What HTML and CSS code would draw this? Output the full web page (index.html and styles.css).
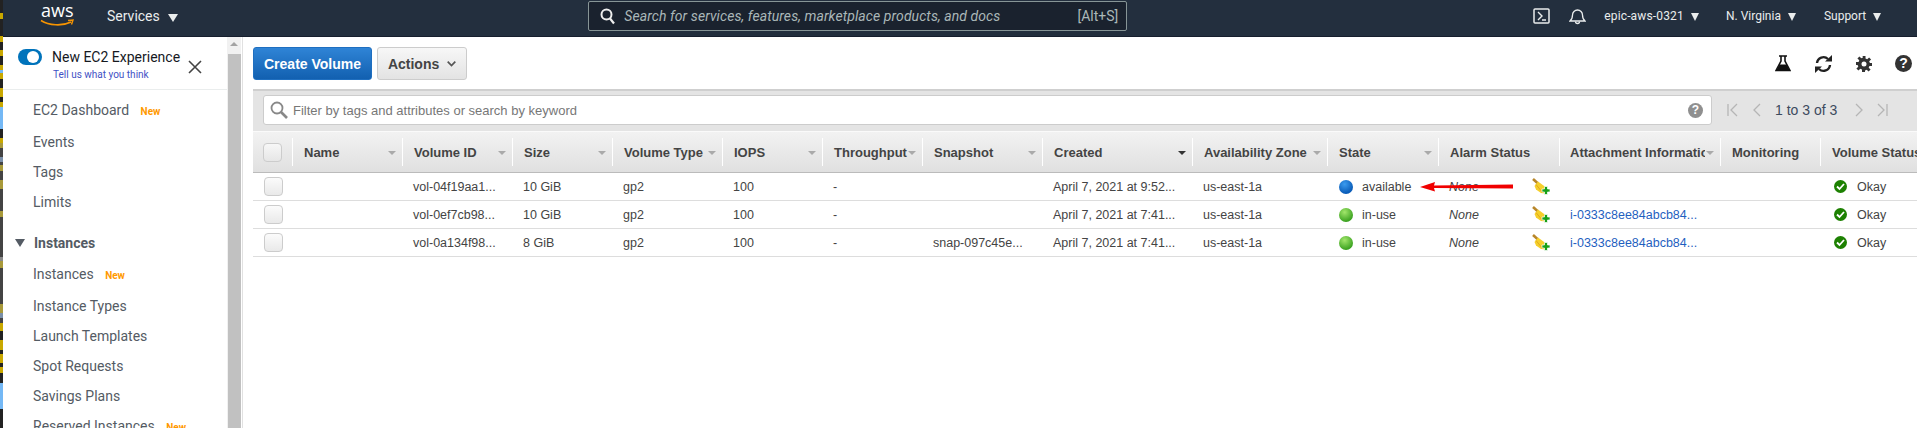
FILE: index.html
```html
<!DOCTYPE html>
<html lang="en">
  <head>
    <meta charset="UTF-8" />
    <title>Volumes | EC2 Management Console</title>
    <link rel="stylesheet" href="styles.css">
  </head>

  <body>
    <div class="strip"></div>

    <div class="page">
      <!--Top bar-->
      <header class="topbar">
        <div class="logo">
          <span class="logo-text">aws</span>
          <svg class="logo-smile" width="34" height="8" viewBox="0 0 34 8"><path d="M1 1.500C9 6.500 22 7.500 31 3" fill="none" stroke="#f79400" stroke-width="1.600"/><path d="M28 1.500l5-.5-1.500 4.500" fill="none" stroke="#f79400" stroke-width="1.400"/></svg>
        </div>
        <span class="nav-item services">Services <i class="tri tri-big"></i></span>
        <div class="searchbox">
          <svg width="16" height="17" viewBox="0 0 16 17"><circle cx="6.500" cy="6.500" r="5" fill="none" stroke="#eee" stroke-width="2"/><path d="M10 10.500l4 5" stroke="#eee" stroke-width="2.200"/></svg>
          <span class="search-hint">Search for services, features, marketplace products, and docs</span>
          <span class="search-key">[Alt+S]</span>
        </div>
        <svg class="term-icon" width="17" height="16" viewBox="0 0 17 16"><rect x="1" y="1" width="15" height="14" rx="1" fill="none" stroke="#eaeded" stroke-width="1.500"/><path d="M5 4l4 4-4 4M9 12h4" fill="none" stroke="#eaeded" stroke-width="1.400"/></svg>
        <svg class="bell-icon" width="17" height="17" viewBox="0 0 17 17"><path d="M1 13c2-1.500 2.500-3 2.500-6a5 5 0 0 1 10 0c0 3 .5 4.500 2.500 6z" fill="none" stroke="#eaeded" stroke-width="1.300"/><path d="M6.500 13.500a2 2 0 0 0 4 0" fill="none" stroke="#eaeded" stroke-width="1.300"/></svg>
        <span class="nav-item small account">epic-aws-0321 <i class="tri"></i></span>
        <span class="nav-item small region">N. Virginia <i class="tri"></i></span>
        <span class="nav-item small support">Support <i class="tri"></i></span>
      </header>

      <div class="main">
        <!--Side menu-->
        <nav class="sidebar">
          <div class="experience">
            <span class="toggle"></span>
            <div class="exp-text">
              <div class="exp-title">New EC2 Experience</div>
              <a class="exp-link">Tell us what you think</a>
            </div>
            <svg class="exp-close" width="14" height="14" viewBox="0 0 14 14"><path d="M1 1l12 12M13 1L1 13" stroke="#444" stroke-width="1.600"/></svg>
          </div>
          <ul class="menu menu-top">
            <li class="first">EC2 Dashboard <span class="new">New</span></li>
            <li>Events</li>
            <li>Tags</li>
            <li>Limits</li>
          </ul>
          <div class="menu-head"><i class="tri-menu"></i>Instances</div>
          <ul class="menu">
            <li class="first">Instances <span class="new">New</span></li>
            <li>Instance Types</li>
            <li>Launch Templates</li>
            <li>Spot Requests</li>
            <li>Savings Plans</li>
            <li>Reserved Instances <span class="new">New</span></li>
          </ul>
        </nav>
        <div class="scrollbar"><i class="scroll-up"></i><div class="scroll-thumb"></div></div>

        <!--Volumes list-->
        <section class="content">
          <div class="toolbar">
            <button class="btn btn-primary" type="button">Create Volume</button>
            <button class="btn btn-plain" type="button">Actions <svg width="9" height="6" viewBox="0 0 9 6"><path d="M.7 .7l3.800 3.800L8.300 .7" fill="none" stroke="#555" stroke-width="1.700"/></svg></button>
            <div class="tools">
              <svg width="16" height="17" viewBox="0 0 16 17"><path d="M4 1h8M6 1v5L1 15.500h14L10 6V1" fill="none" stroke="#111" stroke-width="1.600"/><path d="M4.500 9.500h7L15 16H1z" fill="#111"/></svg>
              <svg width="19" height="18" viewBox="0 0 19 18"><path d="M3 8a6.500 6.500 0 0 1 11-4" fill="none" stroke="#222" stroke-width="2.400"/><path d="M11 6.500h7V0z" fill="#222"/><path d="M16 10a6.500 6.500 0 0 1-11 4" fill="none" stroke="#222" stroke-width="2.400"/><path d="M8 11.500H1V18z" fill="#222"/></svg>
              <svg width="16" height="16" viewBox="0 0 16 16"><path d="M6.500 0h3v2.600l1.700.7 1.900-1.900 2 2-1.900 1.900.7 1.700H16v3h-2.600l-.7 1.700 1.900 1.900-2 2-1.900-1.900-1.700.7V16h-3v-2.600l-1.700-.7-1.900 1.900-2-2 1.900-1.900-.7-1.700H0v-3h2.600l.7-1.700-1.900-1.900 2-2 1.900 1.900 1.700-.7z" fill="#333"/><circle cx="8" cy="8" r="2.500" fill="#fff"/></svg>
              <span class="help help-dark">?</span>
            </div>
          </div>

          <div class="filterbar">
            <div class="filter-input">
              <svg width="18" height="18" viewBox="0 0 18 18"><circle cx="7" cy="7" r="5.500" fill="none" stroke="#888" stroke-width="1.800"/><path d="M11 11l6 6" stroke="#888" stroke-width="2.600"/></svg>
              <span class="filter-hint">Filter by tags and attributes or search by keyword</span>
              <span class="help help-grey">?</span>
            </div>
            <div class="pager">
              <svg width="12" height="14" viewBox="0 0 12 14"><path d="M1 1v12M10 1L4 7l6 6" fill="none" stroke="#b5b5b5" stroke-width="1.300"/></svg>
              <svg class="pg-prev" width="8" height="14" viewBox="0 0 8 14"><path d="M7 1L1 7l6 6" fill="none" stroke="#b5b5b5" stroke-width="1.300"/></svg>
              <span class="pg-text">1 to 3 of 3</span>
              <svg class="pg-next" width="8" height="14" viewBox="0 0 8 14"><path d="M1 1l6 6-6 6" fill="none" stroke="#b5b5b5" stroke-width="1.300"/></svg>
              <svg class="pg-last" width="12" height="14" viewBox="0 0 12 14"><path d="M2 1l6 6-6 6M11 1v12" fill="none" stroke="#b5b5b5" stroke-width="1.300"/></svg>
            </div>
          </div>

          <div class="grid">
            <div class="row head">
              <div class="cell"><span class="check head-check"></span></div>
              <div class="cell">Name<i class="sort"></i></div>
              <div class="cell">Volume ID<i class="sort"></i></div>
              <div class="cell">Size<i class="sort"></i></div>
              <div class="cell">Volume Type<i class="sort"></i></div>
              <div class="cell">IOPS<i class="sort"></i></div>
              <div class="cell">Throughput<i class="sort"></i></div>
              <div class="cell">Snapshot<i class="sort"></i></div>
              <div class="cell">Created<i class="sort sort-on"></i></div>
              <div class="cell">Availability Zone<i class="sort"></i></div>
              <div class="cell">State<i class="sort"></i></div>
              <div class="cell">Alarm Status</div>
              <div class="cell cell-attach"><span class="clip">Attachment Information</span><i class="sort"></i></div>
              <div class="cell">Monitoring</div>
              <div class="cell">Volume Status</div>
            </div>

            <div class="row">
              <div class="cell"><span class="check"></span></div>
              <div class="cell"></div>
              <div class="cell">vol-04f19aa1...</div>
              <div class="cell">10 GiB</div>
              <div class="cell">gp2</div>
              <div class="cell">100</div>
              <div class="cell">-</div>
              <div class="cell"></div>
              <div class="cell">April 7, 2021 at 9:52...</div>
              <div class="cell">us-east-1a</div>
              <div class="cell"><i class="dot dot-blue"></i>available</div>
              <div class="cell alarm"><em>None</em><svg class="broom" width="19" height="18" viewBox="0 0 19 18"><use href="#broom"/></svg></div>
              <div class="cell"></div>
              <div class="cell"></div>
              <div class="cell"><svg class="ok" width="13" height="13" viewBox="0 0 13 13"><use href="#okay"/></svg>Okay</div>
              <svg class="red-arrow" width="94" height="12" viewBox="0 0 94 12"><path d="M0 6L15 1l-1 3.500 79-1v4l-79-.5 1 3.500z" fill="#f00000"/></svg>
            </div>

            <div class="row">
              <div class="cell"><span class="check"></span></div>
              <div class="cell"></div>
              <div class="cell">vol-0ef7cb98...</div>
              <div class="cell">10 GiB</div>
              <div class="cell">gp2</div>
              <div class="cell">100</div>
              <div class="cell">-</div>
              <div class="cell"></div>
              <div class="cell">April 7, 2021 at 7:41...</div>
              <div class="cell">us-east-1a</div>
              <div class="cell"><i class="dot dot-green"></i>in-use</div>
              <div class="cell alarm"><em>None</em><svg class="broom" width="19" height="18" viewBox="0 0 19 18"><use href="#broom"/></svg></div>
              <div class="cell link">i-0333c8ee84abcb84...</div>
              <div class="cell"></div>
              <div class="cell"><svg class="ok" width="13" height="13" viewBox="0 0 13 13"><use href="#okay"/></svg>Okay</div>
            </div>

            <div class="row">
              <div class="cell"><span class="check"></span></div>
              <div class="cell"></div>
              <div class="cell">vol-0a134f98...</div>
              <div class="cell">8 GiB</div>
              <div class="cell">gp2</div>
              <div class="cell">100</div>
              <div class="cell">-</div>
              <div class="cell">snap-097c45e...</div>
              <div class="cell">April 7, 2021 at 7:41...</div>
              <div class="cell">us-east-1a</div>
              <div class="cell"><i class="dot dot-green"></i>in-use</div>
              <div class="cell alarm"><em>None</em><svg class="broom" width="19" height="18" viewBox="0 0 19 18"><use href="#broom"/></svg></div>
              <div class="cell link">i-0333c8ee84abcb84...</div>
              <div class="cell"></div>
              <div class="cell"><svg class="ok" width="13" height="13" viewBox="0 0 13 13"><use href="#okay"/></svg>Okay</div>
            </div>
          </div>
        </section>
      </div>
    </div>

    <!--Shared icons-->
    <svg class="defs" width="0" height="0">
      <defs>
        <g id="broom">
          <path d="M1 1l5 4.500" stroke="#b8862a" stroke-width="2.600"/>
          <path d="M6 3.500L13.500 9l.5 6.500-5-.5-5-3.500-1.500-3.500z" fill="#f5cf2b"/>
          <path d="M4 6.500l6.500 8" stroke="#e2a91c" stroke-width="1"/>
          <path d="M12.500 8.500h3V11H18v3h-2.500v2.500h-3V14H10v-3h2.500z" fill="#17a017" stroke="#fff" stroke-width=".7"/>
        </g>
        <g id="okay">
          <circle cx="6.500" cy="6.500" r="6.500" fill="#1d8102"/>
          <path d="M3 6.500l2.500 2.500L10 4" fill="none" stroke="#fff" stroke-width="1.800"/>
        </g>
      </defs>
    </svg>
  </body>
</html>
```
FILE: styles.css
```css
* {
  box-sizing: border-box;
}

body {
  display: flex;
  margin: 0;
  height: 428px;
  overflow: hidden;
  font-family: 'Liberation Sans', Arial, sans-serif;
  font-size: 12px;
  color: #444;
  background: #fff;
}

ul {
  list-style: none;
  margin: 0;
  padding: 0;
}

/* coloured edge on the left */
.strip {
  width: 3px;
  flex: none;
  background: linear-gradient(
    to bottom,
    #222 0 13px,
    #c9a800 13px 19px,
    #222 19px 36px,
    #c9a800 36px 42px,
    #222 42px 50px,
    #c9a800 50px 56px,
    #222 56px 65px,
    #c9a800 65px 70px,
    #74b8f5 70px 73px,
    #c9a800 73px 79px,
    #222 79px 88px,
    #c9a800 88px 97px,
    #222 97px 102px,
    #c9a800 102px 107px,
    #74b8f5 107px 129px,
    #222 129px 138px,
    #c9a800 138px 143px,
    #a8993a 143px 148px,
    #444 148px 157px,
    #7a8fa8 157px 162px,
    #444 162px 165px,
    #a8993a 165px 171px,
    #444 171px 180px,
    #a8993a 180px 189px,
    #444 189px 211px,
    #a8993a 211px 217px,
    #444 217px 257px,
    #888 257px 261px,
    #a8993a 261px 268px,
    #444 268px 304px,
    #a8993a 304px 313px,
    #7a8fa8 313px 318px,
    #444 318px 323px,
    #c9a800 323px 331px,
    #222 331px 340px,
    #c9a800 340px 350px,
    #222 350px 354px,
    #c9a800 354px 363px,
    #222 363px 367px,
    #c9a800 367px 373px,
    #222 373px 383px,
    #74b8f5 383px 409px,
    #222 409px 428px
  );
}

.page {
  flex: 1;
  min-width: 0;
}

/* top bar */
.topbar {
  display: flex;
  align-items: center;
  height: 37px;
  padding-bottom: 4px;
  background: #232f3e;
  border-bottom: 1px solid #161e2d;
  color: #eaeded;
  font-family: Roboto, sans-serif;
}

.logo {
  width: 34px;
  height: 30px;
  margin-left: 37px;
}

.logo-text {
  display: block;
  font-family: 'Open Sans', sans-serif;
  font-size: 18px;
  line-height: 19px;
  color: #fff;
  padding-left: 1px;
}

.logo-smile {
  display: block;
  margin-top: -1px;
}

.nav-item {
  white-space: nowrap;
}

.services {
  margin-left: 33px;
  font-size: 14px;
}

.small {
  font-size: 12px;
}

.tri {
  display: inline-block;
  margin-left: 4px;
  border-left: 4px solid transparent;
  border-right: 4px solid transparent;
  border-top: 8px solid #eaeded;
  vertical-align: -1px;
}

.tri-big {
  margin-left: 5px;
  border-left-width: 5px;
  border-right-width: 5px;
}

.searchbox {
  display: flex;
  align-items: center;
  width: 539px;
  height: 30px;
  margin-left: 410px;
  padding: 0 8px 0 11px;
  background: #1a222e;
  border: 1px solid #879596;
  border-radius: 2px;
}

.search-hint {
  flex: 1;
  margin-left: 8px;
  font-style: italic;
  font-size: 14px;
  letter-spacing: .08px;
  color: #aab7b8;
}

.search-key {
  font-size: 14px;
  color: #aab7b8;
}

.term-icon {
  flex: none;
  margin-left: 406px;
}

.bell-icon {
  flex: none;
  margin-left: 19px;
}

.account {
  margin-left: 18px;
  letter-spacing: .15px;
}

.region {
  margin-left: 27px;
}

.support {
  margin-left: 28px;
}

/* page body */
.main {
  display: flex;
  height: 391px;
}

.sidebar {
  width: 224px;
  flex: none;
  overflow: hidden;
  color: #545b64;
  font-family: Roboto, sans-serif;
  font-size: 14px;
}

.experience {
  display: flex;
  height: 53px;
  padding: 12px 0 0 15px;
  border-bottom: 1px solid #eaeded;
}

.toggle {
  position: relative;
  width: 24px;
  height: 16px;
  flex: none;
  border-radius: 8px;
  background: #0073bb;
}

.toggle::after {
  content: '';
  position: absolute;
  right: 3px;
  top: 2px;
  width: 12px;
  height: 12px;
  border-radius: 50%;
  background: #fff;
}

.exp-text {
  margin-left: 10px;
}

.exp-title {
  color: #16191f;
  font-size: 14px;
  line-height: 17px;
  white-space: nowrap;
}

.exp-link {
  display: block;
  margin-top: 3px;
  padding-left: 1px;
  color: #3f51c5;
  font-size: 10px;
  white-space: nowrap;
}

.exp-close {
  flex: none;
  margin: 11px 0 0 8px;
}

.menu {
  padding-top: 1px;
}

.menu-top {
  padding-top: 5px;
}

.menu li {
  height: 30px;
  padding-left: 30px;
  line-height: 30px;
  white-space: nowrap;
}

.menu li.first {
  height: 32px;
}

.new {
  margin-left: 8px;
  font-size: 10px;
  font-weight: 700;
  color: #ff9900;
}

.menu-head {
  display: flex;
  align-items: center;
  height: 30px;
  margin-top: 11px;
  padding-left: 12px;
  font-weight: 700;
}

.tri-menu {
  width: 0;
  margin-right: 9px;
  border-left: 5px solid transparent;
  border-right: 5px solid transparent;
  border-top: 8px solid #545b64;
}

.scrollbar {
  position: relative;
  width: 14px;
  flex: none;
  margin-right: 1px;
  padding-top: 17px;
  background: #f1f1f1;
}

.scroll-up {
  position: absolute;
  left: 3px;
  top: 5px;
  border-left: 4px solid transparent;
  border-right: 4px solid transparent;
  border-bottom: 4px solid #a3a3a3;
}

.scroll-thumb {
  height: 100%;
  margin-left: 1px;
  background: #c1c1c1;
}

.content {
  flex: 1;
  min-width: 0;
  padding-left: 10px;
  border-left: 1px solid #e1e1e1;
}

/* buttons */
.toolbar {
  display: flex;
  align-items: center;
  height: 52px;
  padding-top: 1px;
}

.btn {
  height: 33px;
  border-radius: 3px;
  font-family: 'Liberation Sans', Arial, sans-serif;
  font-size: 14px;
  font-weight: 700;
}

.btn-primary {
  width: 119px;
  padding: 0;
  color: #fff;
  background: linear-gradient(#2f84d6, #1260b0);
  border: 1px solid #1f6fc0;
}

.btn-plain {
  width: 90px;
  margin-left: 5px;
  color: #444;
  background: linear-gradient(#f7f7f7, #e3e3e3);
  border: 1px solid #ccc;
}

.btn-plain svg {
  margin-left: 4px;
  vertical-align: 2px;
}

.tools {
  display: flex;
  align-items: center;
  margin-left: auto;
  padding-right: 5px;
  gap: 23px;
}

.help {
  display: inline-block;
  border-radius: 50%;
  color: #fff;
  font-weight: 700;
  text-align: center;
}

.help-dark {
  width: 17px;
  height: 17px;
  background: #333;
  font-size: 14px;
  line-height: 17px;
}

.help-grey {
  width: 15px;
  height: 15px;
  background: #8f8f8f;
  font-size: 12px;
  line-height: 15px;
}

/* filter */
.filterbar {
  display: flex;
  align-items: center;
  height: 42px;
  padding: 0 0 2px 10px;
  background: #e4e4e4;
  border-top: 2px solid #cfcfcf;
}

.filter-input {
  display: flex;
  align-items: center;
  width: 1449px;
  flex: none;
  height: 30px;
  padding: 0 8px 0 6px;
  background: #fff;
  border: 1px solid #ccc;
  border-radius: 3px;
}

.filter-hint {
  flex: 1;
  margin-left: 5px;
  color: #777;
  font-size: 13px;
}

.pager {
  display: flex;
  align-items: center;
  padding-left: 15px;
}

.pg-prev {
  margin-left: 14px;
}

.pg-text {
  margin-left: 14px;
  color: #3c4a5e;
  font-size: 14px;
  white-space: nowrap;
}

.pg-next {
  margin-left: 18px;
}

.pg-last {
  margin-left: 13px;
}

/* table */
.grid {
  width: 1664px;
}

.row {
  position: relative;
  display: grid;
  grid-template-columns: 40px 110px 110px 100px 110px 100px 100px 120px 150px 135px 111px 121px 161px 100px 96px;
  height: 28px;
  align-items: center;
  border-bottom: 1px solid #ddd;
  font-size: 12.500px;
  color: #444;
}

.cell {
  display: flex;
  align-items: center;
  height: 100%;
  padding-left: 10px;
  white-space: nowrap;
  overflow: hidden;
}

.row .cell:first-child {
  padding-left: 11px;
}

.head {
  height: 42px;
  background: linear-gradient(#f2f2f2, #e0e0e0);
  border-top: 1px solid #fafafa;
  border-bottom: 1px solid #bbb;
  font-weight: 700;
  font-size: 13px;
}

.head .cell {
  position: relative;
  height: 28px;
  padding-left: 11px;
  padding-right: 4px;
  border-right: 1px solid #fff;
}

.head .cell:first-child {
  padding-left: 10px;
}

.head .cell:last-child {
  border-right: 0;
}

.head .cell-attach {
  padding-left: 10px;
}

.clip {
  width: 135px;
  flex: none;
  overflow: hidden;
}

.sort {
  position: absolute;
  right: 6px;
  top: 13px;
  border-left: 4px solid transparent;
  border-right: 4px solid transparent;
  border-top: 4px solid #aaa;
}

.sort-on {
  border-top-color: #333;
}

.check {
  display: block;
  width: 19px;
  height: 19px;
  border: 1px solid #ccc;
  border-radius: 4px;
  background: linear-gradient(#fbfbfb, #e9e9e9);
}

.head-check {
  background: linear-gradient(#f7f7f7, #e6e6e6);
}

.dot {
  width: 14px;
  height: 14px;
  flex: none;
  margin: 0 9px 0 1px;
  border-radius: 50%;
}

.dot-blue {
  background: radial-gradient(circle at 40% 30%, #3b9bef, #0a5cb8 70%);
}

.dot-green {
  background: radial-gradient(circle at 40% 30%, #a2e66b, #38a01e 75%);
}

.alarm em {
  width: 83px;
}

.broom {
  flex: none;
}

.link {
  color: #1f5fbf;
}

.ok {
  flex: none;
  margin: 0 10px 0 3px;
}

.red-arrow {
  position: absolute;
  left: 1167px;
  top: 8px;
}

.defs {
  position: absolute;
}
```
